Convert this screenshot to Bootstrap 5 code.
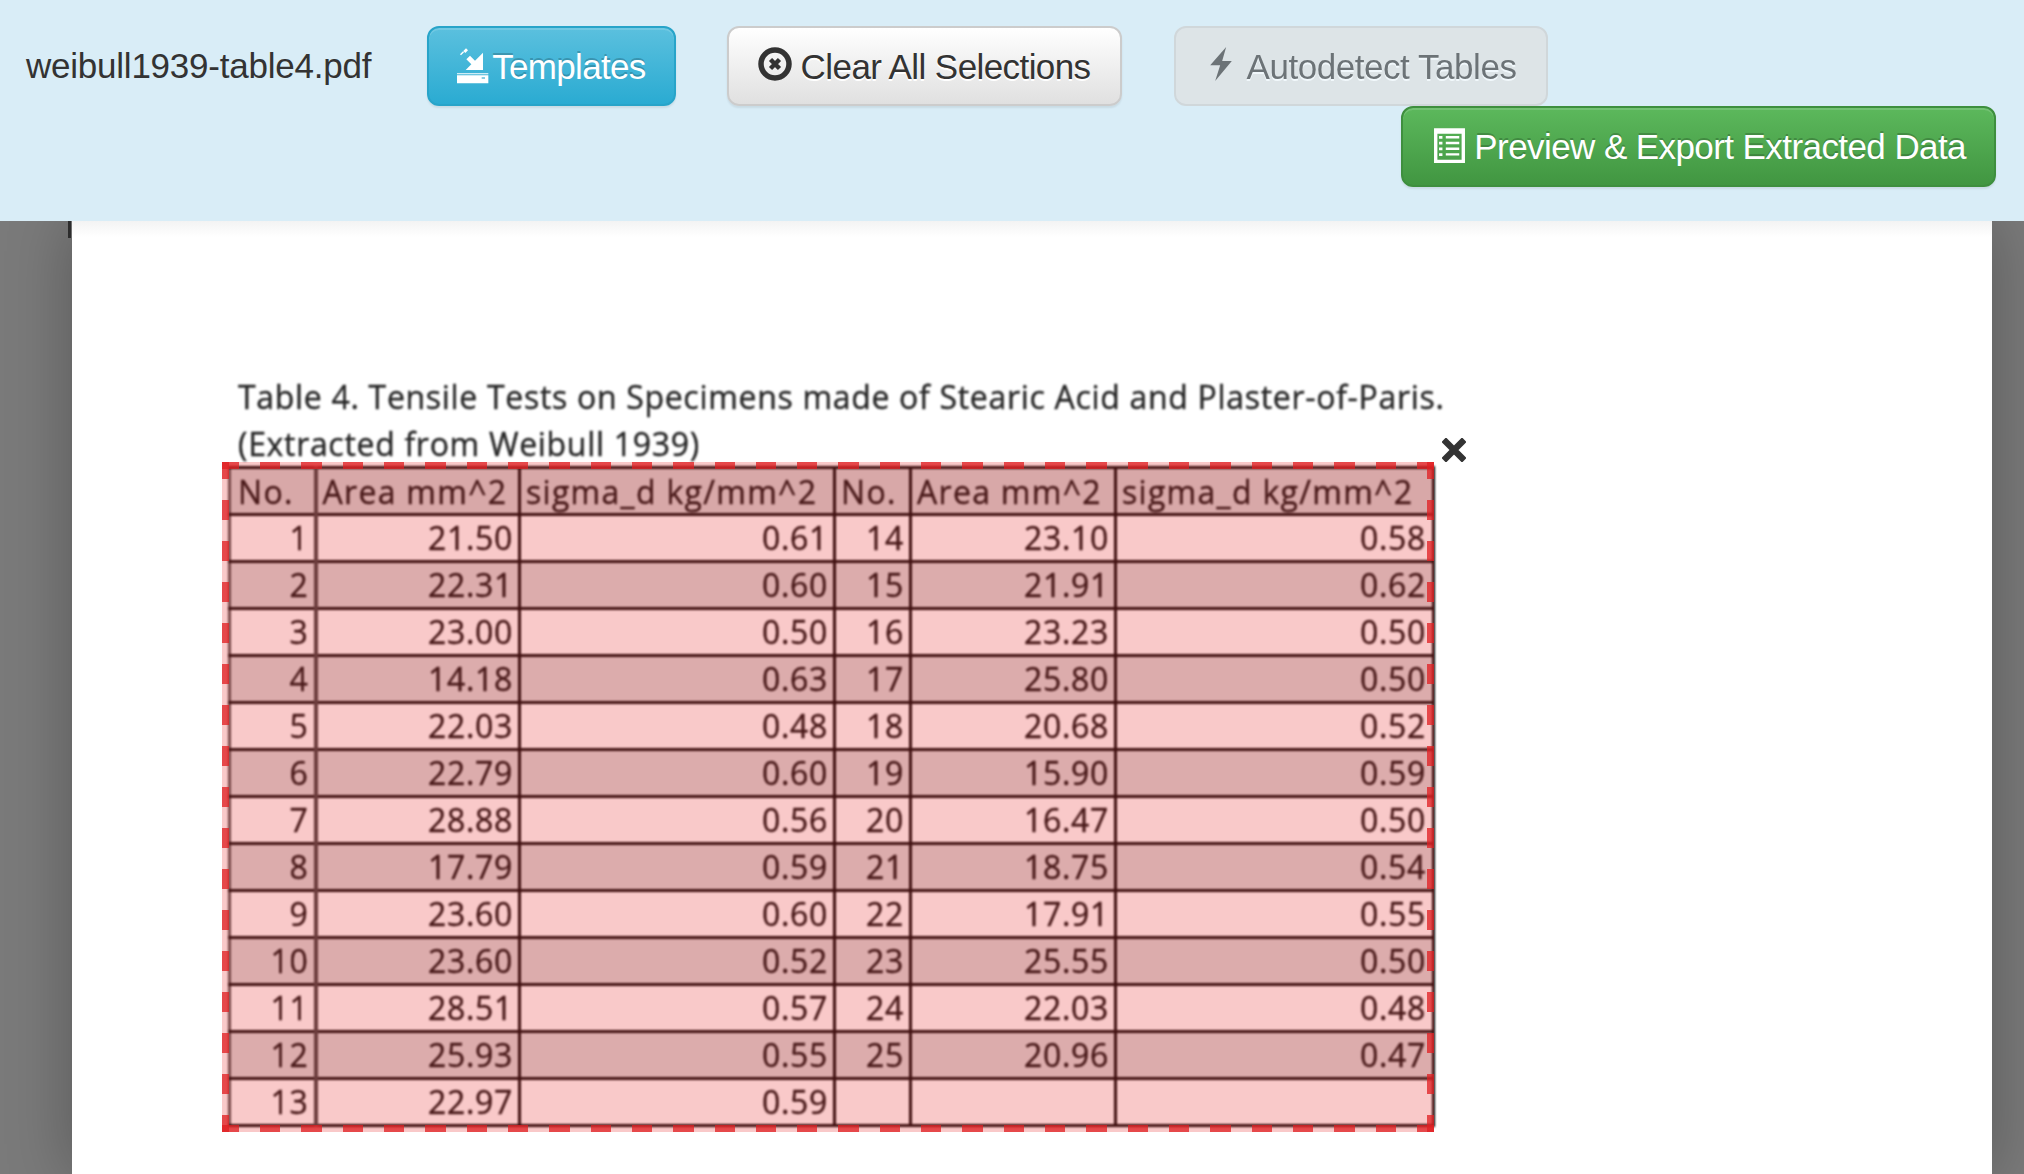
<!DOCTYPE html>
<html lang="en">
<head>
<meta charset="utf-8">
<title>Tabula - weibull1939-table4.pdf</title>
<link rel="stylesheet" href="https://cdn.jsdelivr.net/npm/bootstrap@5.3.0/dist/css/bootstrap.min.css">
<style>
html, body { height: 100%; }
body { background: #7a7a7a; overflow: hidden; font-family: "Liberation Sans", Arial, sans-serif; color: #333; }
.app-head { background: #d9edf7; height: 221px; padding-top: 26px; position: relative; z-index: 2; }
.file-name { font-size: 35px; letter-spacing: -.23px; line-height: 80px; margin-left: 26px; margin-right: 56px; color: #333; }
.btn.gloss { font-family: "Liberation Sans", Arial, sans-serif; font-size: 35px; letter-spacing: -.68px; line-height: 1; height: 80px; padding: 0 28px; border-width: 2px; border-radius: 12px; display: inline-flex; align-items: center; box-shadow: inset 0 2px 0 rgba(255,255,255,.15), 0 2px 2px rgba(0,0,0,.075); }
.gloss-info { background: linear-gradient(#5bc0de, #2aabd2); border-color: #28a4c9; color: #fff; text-shadow: 0 -2px 0 rgba(0,0,0,.2); }
.btn.gloss-plain { background: linear-gradient(#fff, #e0e0e0); border-color: #ccc; color: #333; text-shadow: 0 2px 0 #fff; margin-left: 51px; padding: 0 29px; letter-spacing: -.58px; }
.btn.gloss-off { background: #e0e0e0; border-color: #ccc; color: #333; text-shadow: 0 2px 0 #fff; opacity: .65; margin-left: 52px; box-shadow: none; padding: 0 29px 0 30px; letter-spacing: -.45px; }
.gloss-go { background: linear-gradient(#5cb85c, #419641); border-color: #3e8f3e; color: #fff; text-shadow: 0 -2px 0 rgba(0,0,0,.2); }
.btn.gloss-go { height: 81px; padding-left: 31px; letter-spacing: -.58px; }
.export-row { padding-right: 28px; }
.ico-tpl { width: 32px; height: 36px; margin-right: 3px; }
.ico-clear { width: 34px; height: 34px; margin-right: 9px; margin-top: -4px; }
.ico-bolt { width: 22px; height: 34px; margin-left: 4px; margin-right: 15px; margin-top: -4px; }
.ico-list { width: 31px; height: 37px; margin-right: 9px; margin-top: -4px; }
.doc-page { background: linear-gradient(#f3f3f3, #fff 16px); margin: 0 32px 0 72px; height: 953px; padding: 151px 0 0 156px; position: relative; box-shadow: 0 0 60px rgba(0,0,0,.28); }
.doc-page::before { content: ""; position: absolute; left: -4px; top: 0; width: 3px; height: 17px; background: #2c2c2c; }
.scan-cap { font-family: "Open Sans", Lato, sans-serif; font-size: 32px; letter-spacing: .69px; line-height: 47px; padding: 1px 0 0 10px; margin-bottom: -1px; color: #262626; filter: blur(.9px); -webkit-text-stroke: .4px #262626; white-space: nowrap; }
.scan-wrap { position: relative; width: 1204px; }
.scan-table { border-collapse: collapse; table-layout: fixed; width: 1204px; font-family: "Open Sans", Lato, sans-serif; font-size: 32px; letter-spacing: .7px; color: #141414; filter: blur(.9px); -webkit-text-stroke: .4px #141414; background: #fff; }
.scan-table td, .scan-table th { height: 47px; padding: 0 5px 0 7px; border: 3px solid #0a0a0a; line-height: 1; font-weight: 400; text-align: right; white-space: nowrap; overflow: hidden; }
.scan-table td:last-child { padding-right: 6px; }
.scan-table th { text-align: left; background: #d3d3d3; padding: 2px 0 0 5px; letter-spacing: 1.3px; }
.scan-table th:first-child { padding-left: 7px; }
.scan-table tbody tr:nth-child(even) td { background: #d9d9d9; }
.scan-table td:first-child, .scan-table th:first-child { border-left-color: #555; border-right-width: 4px; border-right-color: #444; }
.pick-box { position: absolute; left: -6px; top: -4px; width: 1212px; height: 670px;
  --dash: rgba(224,31,34,.76);
  background-color: rgba(231,40,40,.25);
  background-image:
    repeating-linear-gradient(90deg, var(--dash) 0 17px, transparent 17px 38px, var(--dash) 38px 41.32px),
    repeating-linear-gradient(90deg, var(--dash) 0 17px, transparent 17px 38px, var(--dash) 38px 41.32px),
    repeating-linear-gradient(180deg, var(--dash) 0 17px, transparent 17px 38px, var(--dash) 38px 41px),
    repeating-linear-gradient(180deg, var(--dash) 0 17px, transparent 17px 38px, var(--dash) 38px 41px);
  background-size: 100% 7px, 100% 7px, 7px 100%, 7px 100%;
  background-position: 0 0, 0 100%, 0 0, 100% 0;
  background-repeat: no-repeat; }
.pick-close { position: absolute; left: 1214px; top: -28px; width: 24px; height: 24px; }
</style>
</head>
<body>
<header class="app-head">
  <div class="d-flex align-items-start">
    <span class="file-name">weibull1939-table4.pdf</span>
    <a class="btn gloss gloss-info" href="#">
      <svg class="ico-tpl" viewBox="24 14 96 108" fill="#fff" aria-hidden="true"><path d="M24 96h94v24H24zM24 90h94v3H24z"/><path fill="#4db6d6" d="M98 102h10v4H98z"/><path d="M102 28v52H50l17-17-15-15 11-11 15 15zM33 33l9-9 3 3-9 9zM43 23l8-8 6 6-8 8z"/></svg>Templates</a>
    <a class="btn gloss gloss-plain" href="#">
      <svg class="ico-clear" viewBox="0 0 34 34" aria-hidden="true"><circle cx="17" cy="17" r="14" fill="none" stroke="#333" stroke-width="5.5"/><path d="M12.5 12.5l9 9M21.5 12.5l-9 9" stroke="#333" stroke-width="4.5"/></svg>Clear All Selections</a>
    <a class="btn gloss gloss-off disabled" href="#" aria-disabled="true">
      <svg class="ico-bolt" viewBox="30 20 65 102" fill="#333" aria-hidden="true"><path d="M78 20L30 75h30l-15 47 50-60H66z"/></svg>Autodetect Tables</a>
  </div>
  <div class="d-flex justify-content-end export-row">
    <a class="btn gloss gloss-go" href="#">
      <svg class="ico-list" viewBox="30 15 92 110" aria-hidden="true"><path fill="#fff" fill-rule="evenodd" d="M30 22h92v103H30zM40 38v77h72V38z"/><path fill="#fff" d="M45 45h10v8H45zM65 45h40v7H65zM45 62h10v8H45zM65 62h40v7H65zM45 79h10v8H45zM65 79h40v7H65zM45 96h10v8H45zM65 96h40v7H65z"/></svg>Preview &amp; Export Extracted Data</a>
  </div>
</header>
<main class="doc-page">
  <div class="scan-cap">Table 4. Tensile Tests on Specimens made of Stearic Acid and Plaster-of-Paris.<br>(Extracted from Weibull 1939)</div>
  <div class="scan-wrap">
    <table class="scan-table">
      <colgroup><col style="width:86px"><col style="width:204px"><col style="width:315px"><col style="width:76px"><col style="width:205px"><col style="width:318px"></colgroup>
      <thead><tr><th>No.</th><th>Area mm^2</th><th>sigma_d kg/mm^2</th><th>No.</th><th>Area mm^2</th><th>sigma_d kg/mm^2</th></tr></thead>
      <tbody>
        <tr><td>1</td><td>21.50</td><td>0.61</td><td>14</td><td>23.10</td><td>0.58</td></tr>
        <tr><td>2</td><td>22.31</td><td>0.60</td><td>15</td><td>21.91</td><td>0.62</td></tr>
        <tr><td>3</td><td>23.00</td><td>0.50</td><td>16</td><td>23.23</td><td>0.50</td></tr>
        <tr><td>4</td><td>14.18</td><td>0.63</td><td>17</td><td>25.80</td><td>0.50</td></tr>
        <tr><td>5</td><td>22.03</td><td>0.48</td><td>18</td><td>20.68</td><td>0.52</td></tr>
        <tr><td>6</td><td>22.79</td><td>0.60</td><td>19</td><td>15.90</td><td>0.59</td></tr>
        <tr><td>7</td><td>28.88</td><td>0.56</td><td>20</td><td>16.47</td><td>0.50</td></tr>
        <tr><td>8</td><td>17.79</td><td>0.59</td><td>21</td><td>18.75</td><td>0.54</td></tr>
        <tr><td>9</td><td>23.60</td><td>0.60</td><td>22</td><td>17.91</td><td>0.55</td></tr>
        <tr><td>10</td><td>23.60</td><td>0.52</td><td>23</td><td>25.55</td><td>0.50</td></tr>
        <tr><td>11</td><td>28.51</td><td>0.57</td><td>24</td><td>22.03</td><td>0.48</td></tr>
        <tr><td>12</td><td>25.93</td><td>0.55</td><td>25</td><td>20.96</td><td>0.47</td></tr>
        <tr><td>13</td><td>22.97</td><td>0.59</td><td></td><td></td><td></td></tr>
      </tbody>
    </table>
    <div class="pick-box"></div>
    <svg class="pick-close" viewBox="0 0 24 24" aria-label="Remove selection"><path d="M4 4l16 16M20 4L4 20" stroke="#333" stroke-width="6.5" stroke-linecap="square"/></svg>
  </div>
</main>
<script src="https://cdn.jsdelivr.net/npm/bootstrap@5.3.0/dist/js/bootstrap.bundle.min.js"></script>
</body>
</html>
